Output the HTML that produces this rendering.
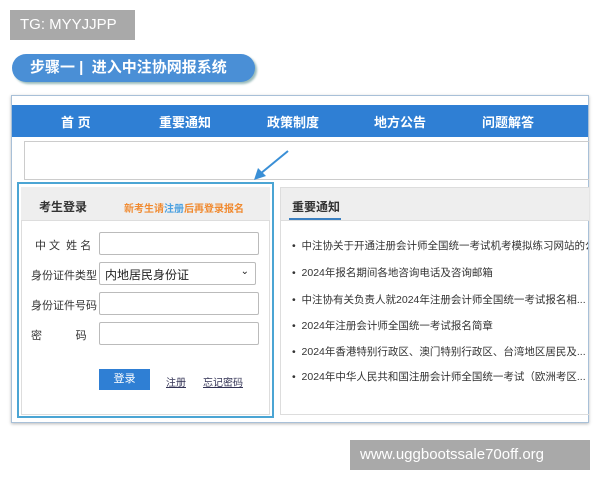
<!DOCTYPE html>
<html><head><meta charset="utf-8"><style>
*{margin:0;padding:0;box-sizing:border-box}
body{width:600px;height:480px;background:#fff;position:relative;overflow:hidden;font-family:"Liberation Sans","Noto Sans CJK SC",sans-serif}
.a{position:absolute}
.tg{left:10px;top:10px;width:125px;height:30px;background:#a9a9a9;color:#fff;font-size:15px;line-height:30px;padding-left:10px}
.pill{left:12px;top:54px;width:243px;height:28px;border-radius:14px;background:#4a8fd6;color:#fff;font-weight:bold;font-size:15px;line-height:28px;padding-left:18px;box-shadow:2px 2px 2px #9bb}
.shot{left:11px;top:95px;width:578px;height:328px;border:1px solid #a8c0d8;background:#fff;box-shadow:0 1px 3px #bbb}
.nav{left:12px;top:105px;width:576px;height:32px;background:#2f7fd4;color:#fff;font-weight:bold;font-size:13px}
.nav span{position:absolute;top:7px}
.srch{left:24px;top:141px;width:565px;height:39px;border:1px solid #ccc;border-right:none}
.login{left:17px;top:182px;width:257px;height:236px;border:2px solid #4ba5d4}
.lh{left:21px;top:187px;width:249px;height:34px;background:#eee;border-bottom:1px solid #ddd}
.lbody{left:21px;top:221px;width:249px;height:194px;border:1px solid #ddd;border-top:none}
.lab{font-size:11px;color:#333}
.inp{height:23px;width:160px;border:1px solid #bbb;border-radius:2px;background:#fff;left:99px}
.right{left:280px;top:187px;width:309px;height:228px;border:1px solid #ddd;border-right:none}
.rh{left:281px;top:188px;width:308px;height:33px;background:#eee;border-bottom:1px solid #ddd}
.li{left:292px;font-size:10.5px;color:#333;white-space:nowrap;width:296px;overflow:hidden}
.wm{left:350px;top:440px;width:240px;height:30px;background:#a9a9a9;color:#fff;font-size:15px;line-height:30px;padding-left:10px}
</style></head><body>
<div class="a tg">TG: MYYJJPP</div>
<div class="a pill">步骤一 |&nbsp; 进入中注协网报系统</div>
<div class="a shot"></div>
<div class="a nav"><span style="left:49px">首 页</span><span style="left:147px">重要通知</span><span style="left:255px">政策制度</span><span style="left:362px">地方公告</span><span style="left:470px">问题解答</span></div>
<div class="a srch"></div>
<svg class="a" style="left:248px;top:148px" width="44" height="36"><path d="M40 3 L12 26" stroke="#3a8fd6" stroke-width="2" fill="none"/><path d="M6 32 L10 20 L18 28 Z" fill="#3a8fd6"/></svg>
<div class="a login"></div>
<div class="a lh"></div>
<div class="a" style="left:39px;top:198px;font-size:12px;font-weight:bold;color:#333">考生登录</div>
<div class="a" style="left:124px;top:200px;font-size:10px;font-weight:bold;color:#f08a30">新考生请<span style="color:#4aa0e0">注册</span>后再登录报名</div>
<div class="a lbody"></div>
<div class="a lab" style="left:35px;top:237px">中 文 &nbsp;姓 名</div>
<div class="a inp" style="top:232px"></div>
<div class="a lab" style="left:31px;top:267px">身份证件类型</div>
<div class="a inp" style="top:262px;width:157px;font-size:12px;color:#222;padding:3px 0 0 5px">内地居民身份证<span style="position:absolute;right:6px;top:3px;font-size:10px">⌄</span></div>
<div class="a lab" style="left:31px;top:297px">身份证件号码</div>
<div class="a inp" style="top:292px"></div>
<div class="a lab" style="left:31px;top:327px">密 &nbsp;&nbsp;&nbsp;&nbsp;&nbsp;&nbsp;&nbsp;&nbsp;&nbsp;&nbsp;码</div>
<div class="a inp" style="top:322px"></div>
<div class="a" style="left:99px;top:369px;width:51px;height:21px;background:#2f7fd4;color:#fff;font-size:11px;text-align:center;line-height:21px">登录</div>
<div class="a" style="left:166px;top:374px;font-size:10px;color:#335;text-decoration:underline">注册</div>
<div class="a" style="left:203px;top:374px;font-size:10px;color:#335;text-decoration:underline">忘记密码</div>
<div class="a right"></div>
<div class="a rh"></div>
<div class="a" style="left:292px;top:198px;font-size:12px;font-weight:bold;color:#333">重要通知</div>
<div class="a" style="left:289px;top:218px;width:52px;height:2px;background:#3a7fc0"></div>
<div class="a li" style="top:238px">•&nbsp; 中注协关于开通注册会计师全国统一考试机考模拟练习网站的公</div>
<div class="a li" style="top:265px">•&nbsp; 2024年报名期间各地咨询电话及咨询邮箱</div>
<div class="a li" style="top:292px">•&nbsp; 中注协有关负责人就2024年注册会计师全国统一考试报名相...</div>
<div class="a li" style="top:318px">•&nbsp; 2024年注册会计师全国统一考试报名简章</div>
<div class="a li" style="top:344px">•&nbsp; 2024年香港特别行政区、澳门特别行政区、台湾地区居民及...</div>
<div class="a li" style="top:369px">•&nbsp; 2024年中华人民共和国注册会计师全国统一考试（欧洲考区...</div>
<div class="a wm">www.uggbootssale70off.org</div>
</body></html>
